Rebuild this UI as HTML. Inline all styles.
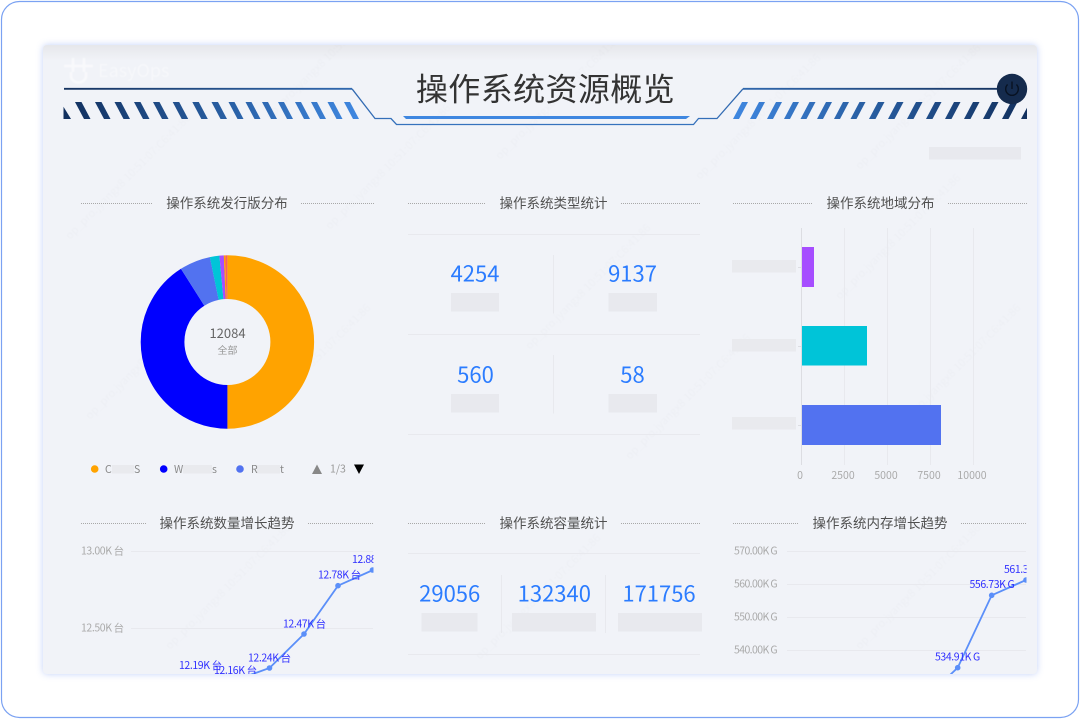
<!DOCTYPE html>
<html lang="zh-CN">
<head>
<meta charset="utf-8">
<title>操作系统资源概览</title>
<style>
html,body{margin:0;padding:0;width:1080px;height:720px;overflow:hidden;background:#fff}
#panel{position:absolute;left:43px;top:45px;width:994px;height:629px;background:#f1f3f8;border-radius:4px;box-shadow:0 0 7px rgba(95,135,240,.38)}
svg{position:absolute;left:0;top:0}
text{font-family:"Noto Sans CJK SC","Liberation Sans",sans-serif}
</style>
</head>
<body>
<div id="panel"></div>
<svg width="1080" height="720" viewBox="0 0 1080 720" xmlns="http://www.w3.org/2000/svg">
<defs>
<clipPath id="pc"><rect x="43" y="45" width="994" height="629" rx="4"/></clipPath>
<clipPath id="c1"><rect x="81" y="530" width="292.5" height="144"/></clipPath>
<clipPath id="c3"><rect x="733" y="530" width="293.5" height="144"/></clipPath>
<filter id="soft" x="-10%" y="-10%" width="120%" height="120%"><feGaussianBlur stdDeviation=".5"/></filter>
<linearGradient id="top" x1="0" y1="0" x2="0" y2="1"><stop offset="0" stop-color="#e6e7eb"/><stop offset="1" stop-color="#f1f3f8"/></linearGradient>
<linearGradient id="gl" gradientUnits="userSpaceOnUse" x1="64" y1="0" x2="358" y2="0"><stop offset="0" stop-color="#12305e"/><stop offset=".5" stop-color="#265a9c"/><stop offset="1" stop-color="#3f87e0"/></linearGradient>
<linearGradient id="gr" gradientUnits="userSpaceOnUse" x1="733" y1="0" x2="1027" y2="0"><stop offset="0" stop-color="#3f87e0"/><stop offset=".5" stop-color="#265a9c"/><stop offset="1" stop-color="#12305e"/></linearGradient>
<linearGradient id="ll" gradientUnits="userSpaceOnUse" x1="64" y1="0" x2="400" y2="0"><stop offset="0" stop-color="#16335f"/><stop offset="1" stop-color="#3672bd"/></linearGradient>
<linearGradient id="lr" gradientUnits="userSpaceOnUse" x1="690" y1="0" x2="1005" y2="0"><stop offset="0" stop-color="#3672bd"/><stop offset="1" stop-color="#16335f"/></linearGradient>
</defs>

<rect x="1.5" y="1.5" width="1077" height="716" rx="18" fill="none" stroke="#7ba2f2" stroke-width="1.2"/>

<g clip-path="url(#pc)">
<rect x="43" y="45" width="994" height="16" fill="url(#top)"/>

<!-- watermark -->
<g font-size="11" fill="#000" fill-opacity=".02" filter="url(#soft)">
<text transform="translate(70,240) rotate(-45)">op_pro.jyangx8 10:51:07:C6:41:86</text>
<text transform="translate(270,120) rotate(-45)">op_pro.jyangx8 10:51:07:C6:41:86</text>
<text transform="translate(330,230) rotate(-45)">op_pro.jyangx8 10:51:07:C6:41:86</text>
<text transform="translate(500,160) rotate(-45)">op_pro.jyangx8 10:51:07:C6:41:86</text>
<text transform="translate(700,180) rotate(-45)">op_pro.jyangx8 10:51:07:C6:41:86</text>
<text transform="translate(860,170) rotate(-45)">op_pro.jyangx8 10:51:07:C6:41:86</text>
<text transform="translate(530,350) rotate(-45)">op_pro.jyangx8 10:51:07:C6:41:86</text>
<text transform="translate(840,300) rotate(-45)">op_pro.jyangx8 10:51:07:C6:41:86</text>
<text transform="translate(900,430) rotate(-45)">op_pro.jyangx8 10:51:07:C6:41:86</text>
<text transform="translate(250,430) rotate(-45)">op_pro.jyangx8 10:51:07:C6:41:86</text>
<text transform="translate(90,420) rotate(-45)">op_pro.jyangx8 10:51:07:C6:41:86</text>
<text transform="translate(630,460) rotate(-45)">op_pro.jyangx8 10:51:07:C6:41:86</text>
<text transform="translate(170,650) rotate(-45)">op_pro.jyangx8 10:51:07:C6:41:86</text>
<text transform="translate(480,660) rotate(-45)">op_pro.jyangx8 10:51:07:C6:41:86</text>
<text transform="translate(860,650) rotate(-45)">op_pro.jyangx8 10:51:07:C6:41:86</text>
</g>

<!-- faint logo -->
<g filter="url(#soft)">
<path d="M64 66H93M73 58V72M84 58V72M71 72V76A7.5 6.5 0 0 0 86 76V72" fill="none" stroke="#fff" stroke-opacity=".5" stroke-width="2.8"/>
<text x="98" y="77" font-size="18" fill="#fff" fill-opacity=".42">EasyOps</text>
</g>

<!-- header lines -->
<path d="M64 88.8H352" fill="none" stroke="url(#ll)" stroke-width="1.9"/>
<path d="M743 88.8H1005" fill="none" stroke="url(#lr)" stroke-width="1.9"/>
<path d="M352 88.8L375 118.5H391L396.5 124.5H540" fill="none" stroke="url(#ll)" stroke-width="1.3"/>
<path d="M540 124.5H693.5L698.5 118.5H717L743 88.8" fill="none" stroke="url(#lr)" stroke-width="1.3"/>
<polygon points="403,116 690,116 686,119 406,119" fill="#3f87e0"/>

<g fill="url(#gl)">
<polygon points="63.5,106.7 71,119 63.5,119"/>
<polygon points="75,102 81.5,102 90.5,119 84,119"/>
<polygon points="95,102 101.5,102 110.5,119 104,119"/>
<polygon points="114.5,102 121,102 130,119 123.5,119"/>
<polygon points="134,102 140.5,102 149.5,119 143,119"/>
<polygon points="153,102 159.5,102 168.5,119 162,119"/>
<polygon points="172.7,102 179.2,102 188.2,119 181.7,119"/>
<polygon points="192.3,102 198.8,102 207.8,119 201.3,119"/>
<polygon points="211.5,102 218,102 227,119 220.5,119"/>
<polygon points="228.5,102 234.5,102 243.5,119 237.5,119"/>
<polygon points="245.5,102 251.5,102 260.5,119 254.5,119"/>
<polygon points="262,102 268,102 277,119 271,119"/>
<polygon points="278,102 284,102 293,119 287,119"/>
<polygon points="295,102 301,102 310,119 304,119"/>
<polygon points="311,102 317,102 326,119 320,119"/>
<polygon points="327.5,102 333.5,102 342.5,119 336.5,119"/>
<polygon points="344,102 350,102 359,119 353,119"/>
</g>
<g fill="url(#gr)">
<polygon points="733,119 739,119 748,102 742,102"/>
<polygon points="750,119 756,119 765,102 759,102"/>
<polygon points="767,119 773,119 782,102 776,102"/>
<polygon points="784,119 790,119 799,102 793,102"/>
<polygon points="800.5,119 806.5,119 815.5,102 809.5,102"/>
<polygon points="817,119 823,119 832,102 826,102"/>
<polygon points="834,119 840,119 849,102 843,102"/>
<polygon points="850.5,119 856.5,119 865.5,102 859.5,102"/>
<polygon points="869,119 875.5,119 884.5,102 878,102"/>
<polygon points="888,119 894.5,119 903.5,102 897,102"/>
<polygon points="907,119 913.5,119 922.5,102 916,102"/>
<polygon points="926,119 932.5,119 941.5,102 935,102"/>
<polygon points="945,119 951.5,119 960.5,102 954,102"/>
<polygon points="964,119 970.5,119 979.5,102 973,102"/>
<polygon points="983,119 989.5,119 998.5,102 992,102"/>
<polygon points="1002,119 1008.5,119 1017.5,102 1011,102"/>
<polygon points="1021,119 1027,119 1027,107.7"/>
</g>

<text x="545.5" y="100.5" font-size="32" fill="#333" text-anchor="middle" letter-spacing=".4">操作系统资源概览</text>

<!-- power button -->
<circle cx="1012" cy="89" r="15.2" fill="#152b4d"/>
<path d="M1007.6 84.5A6.3 6.3 0 1 0 1016.4 84.5M1012 81.5V89" fill="none" stroke="#081222" stroke-width="1.4"/>

<rect x="929" y="147" width="92" height="12.5" fill="#e8e9ee"/>

<!-- section titles -->
<g font-size="13.5" fill="#505050" text-anchor="middle">
<text x="227" y="208">操作系统发行版分布</text>
<text x="553.5" y="208">操作系统类型统计</text>
<text x="880.5" y="208">操作系统地域分布</text>
<text x="227" y="528">操作系统数量增长趋势</text>
<text x="553.5" y="528">操作系统容量统计</text>
<text x="880" y="528">操作系统内存增长趋势</text>
</g>
<g stroke="#a8a8a8" stroke-width="1" stroke-dasharray="1 1" fill="none">
<path d="M81 203.5H152M301 203.5H374M408 203.5H486M621 203.5H700M733 203.5H812M948 203.5H1027"/>
<path d="M81 523.5H146M308 523.5H374M408 523.5H486M621 523.5H700M733 523.5H799M961 523.5H1027"/>
</g>

<!-- donut -->
<g fill="none" stroke-width="43.7">
<circle cx="227.4" cy="342" r="64.85" stroke="#ffa300" stroke-dasharray="203.7 1000" transform="rotate(-90 227.4 342)"/>
<circle cx="227.4" cy="342" r="64.85" stroke="#0000ff" stroke-dasharray="167 1000" transform="rotate(90 227.4 342)"/>
<circle cx="227.4" cy="342" r="64.85" stroke="#5272f0" stroke-dasharray="23.5 1000" transform="rotate(237.6 227.4 342)"/>
<circle cx="227.4" cy="342" r="64.85" stroke="#00c4d8" stroke-dasharray="7.3 1000" transform="rotate(258.3 227.4 342)"/>
<circle cx="227.4" cy="342" r="64.85" stroke="#a64dff" stroke-dasharray="3.4 1000" transform="rotate(264.7 227.4 342)"/>
<circle cx="227.4" cy="342" r="64.85" stroke="#ffa300" stroke-dasharray="1.2 1000" transform="rotate(267.6 227.4 342)"/>
<circle cx="227.4" cy="342" r="64.85" stroke="#f8605c" stroke-dasharray="1.6 1000" transform="rotate(268.6 227.4 342)"/>
</g>
<text x="227.5" y="338" font-size="13" fill="#666" text-anchor="middle">12084</text>
<text x="227.5" y="354" font-size="10" fill="#999" text-anchor="middle">全部</text>

<!-- legend -->
<circle cx="94.7" cy="469" r="3.8" fill="#ffa300"/>
<circle cx="163.7" cy="469" r="3.8" fill="#0000ff"/>
<circle cx="240" cy="469" r="3.8" fill="#5272f0"/>
<g fill="#e9eaee">
<rect x="112" y="465" width="22" height="8.5"/>
<rect x="183" y="465" width="29" height="8.5"/>
<rect x="257" y="465" width="23" height="8.5"/>
</g>
<g font-size="10.5" fill="#888">
<text x="105" y="473">C</text><text x="134" y="473">S</text>
<text x="174" y="473">W</text><text x="212" y="473">s</text>
<text x="251" y="473">R</text><text x="280" y="473">t</text>
<text x="330" y="472.5" fill="#999">1/3</text>
</g>
<polygon points="317,464.5 322,474 312,474" fill="#888"/>
<polygon points="354,464.5 364,464.5 359,474" fill="#000"/>

<!-- stats -->
<g stroke="#e8e9ee" stroke-width="1" fill="none">
<path d="M408 234.5H700M408 334.5H700M408 434.5H700M553.5 255V313.5M553.5 355V413.5"/>
<path d="M408 553.5H700M408 654.5H700M501.5 575V633M605.5 575V633"/>
</g>
<g font-size="22" fill="#2b7cff" text-anchor="middle">
<text x="475" y="281.5">4254</text>
<text x="632.5" y="281.5">9137</text>
<text x="475.5" y="382.5">560</text>
<text x="632.5" y="382.5">58</text>
<text x="449.7" y="601.5">29056</text>
<text x="554.3" y="601.5">132340</text>
<text x="659" y="601.5">171756</text>
</g>
<g fill="#e8e9ee">
<rect x="451" y="293" width="48" height="18.5"/>
<rect x="608.5" y="293" width="48.5" height="18.5"/>
<rect x="451" y="394" width="48" height="18.5"/>
<rect x="608.5" y="394" width="48.5" height="18.5"/>
<rect x="421.5" y="613" width="56" height="18.5"/>
<rect x="512" y="613" width="84" height="18.5"/>
<rect x="618" y="613" width="84" height="18.5"/>
</g>

<!-- bar chart -->
<g stroke="#e8e9ee" stroke-width="1" fill="none">
<path d="M844.5 228V465M887.5 228V465M930.5 228V465M973.5 228V465"/>
</g>
<path d="M801.5 228V465M798 267.5H801M798 346.5H801M798 425.5H801" stroke="#dcdde2" stroke-width="1" fill="none"/>
<rect x="802" y="247" width="12" height="40" fill="#a64dff"/>
<rect x="802" y="326" width="65" height="39.5" fill="#00c4d8"/>
<rect x="802" y="405" width="139" height="40" fill="#5272f0"/>
<g fill="#e9eaee">
<rect x="732" y="260" width="64" height="12.5"/>
<rect x="732" y="339" width="64" height="12.5"/>
<rect x="732" y="417" width="64" height="12.5"/>
</g>
<g font-size="10.5" fill="#aaa" text-anchor="middle">
<text x="800" y="479">0</text>
<text x="843" y="479">2500</text>
<text x="886" y="479">5000</text>
<text x="929" y="479">7500</text>
<text x="972" y="479">10000</text>
</g>

<!-- line chart left -->
<path d="M131 551.5H373M131 628.5H373" stroke="#e8e9ee" stroke-width="1" fill="none"/>
<g font-size="10.5" fill="#aaa" letter-spacing="-.4">
<text x="81" y="554.5">13.00K 台</text>
<text x="81" y="631.5">12.50K 台</text>
</g>
<g clip-path="url(#c1)">
<path d="M235 680L257 672.5L269.5 668L304 634L338 585.7L373 570" fill="none" stroke="#5b8ff9" stroke-width="1.8"/>
<g fill="#5b8ff9">
<circle cx="269.5" cy="668" r="2.8"/><circle cx="304" cy="634" r="2.8"/><circle cx="338" cy="585.7" r="2.8"/><circle cx="372.5" cy="570" r="2.8"/>
</g>
<g font-size="10.5" fill="#2f2fff" letter-spacing="-.4">
<text x="318" y="578.5">12.78K 台</text>
<text x="283" y="627.5">12.47K 台</text>
<text x="248" y="661.5">12.24K 台</text>
<text x="179" y="669">12.19K 台</text>
<text x="214" y="674">12.16K 台</text>
<text x="352" y="563">12.88K 台</text>
</g>
</g>

<!-- line chart right -->
<path d="M787 551.5H1026M787 584.5H1026M787 617.5H1026M787 650.5H1026" stroke="#e8e9ee" stroke-width="1" fill="none"/>
<g font-size="10.5" fill="#aaa" letter-spacing="-.6">
<text x="734" y="554.5">570.00K G</text>
<text x="734" y="587.5">560.00K G</text>
<text x="734" y="620.5">550.00K G</text>
<text x="734" y="653.5">540.00K G</text>
</g>
<g clip-path="url(#c3)">
<path d="M950 675L957.7 667.7L991.7 595.3L1026 580" fill="none" stroke="#5b8ff9" stroke-width="1.8"/>
<g fill="#5b8ff9">
<circle cx="957.7" cy="667.7" r="2.8"/><circle cx="991.7" cy="595.3" r="2.8"/><circle cx="1026" cy="580" r="2.8"/>
</g>
<g font-size="10.5" fill="#2f2fff" letter-spacing="-.4">
<text x="1004" y="573">561.38K G</text>
<text x="969.5" y="588">556.73K G</text>
<text x="935" y="660.5">534.91K G</text>
</g>
</g>
</g>
</svg>
</body>
</html>
